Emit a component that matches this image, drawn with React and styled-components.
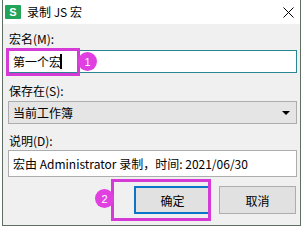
import React from "react";
import styled, { createGlobalStyle } from "styled-components";

const Global = createGlobalStyle`
  html, body { margin: 0; padding: 0; background: #ffffff; }
  body { font-family: "Noto Sans CJK SC", "Microsoft YaHei", sans-serif; font-size: 12px; color: #000; }
`;

const Win = styled.div`
  position: relative;
  margin-left: 2px;
  width: 299px;
  height: 226px;
  box-sizing: border-box;
  border-left: 1px solid #5f6f63;
  border-right: 1px solid #5f6f63;
  border-bottom: 1px solid #5f6f63;
  background: #f0f0f0;
  display: flex;
  flex-direction: column;
`;

const TitleBar = styled.div`
  height: 24px;
  background: #ffffff;
  display: flex;
  align-items: center;
  padding-left: 2px;
  flex-shrink: 0;
`;

const AppIcon = styled.div`
  width: 16px;
  height: 14px;
  background: #22a45a;
  color: #fff;
  font-family: "Liberation Sans", sans-serif;
  font-size: 11px;
  font-weight: bold;
  display: flex;
  align-items: center;
  justify-content: center;
  border-radius: 1px;
`;

const Title = styled.span`
  margin-left: 6px;
  font-size: 12px;
  line-height: 14px;
`;

const CloseBtn = styled.div`
  margin-left: auto;
  width: 24px;
  height: 24px;
  display: flex;
  align-items: center;
  justify-content: center;
`;

const Body = styled.div`
  padding: 6px 3px 0 5px;
  display: flex;
  flex-direction: column;
  flex: 1;
`;

const Label = styled.div`
  padding-left: 1px;
  line-height: 17px;
  height: 17px;
  margin-top: ${(p) => p.$mt || 0}px;
`;

const Field = styled.div`
  position: relative;
  box-sizing: border-box;
  height: ${(p) => p.$h}px;
  margin-top: ${(p) => p.$mt}px;
  border: 1px solid ${(p) => p.$border};
  background: ${(p) => p.$bg};
  display: flex;
  align-items: center;
  padding-left: 4px;
  line-height: 14px;
`;

const Caret = styled.span`
  display: inline-block;
  width: 2px;
  height: 15px;
  background: #000;
  margin-left: -1px;
`;

const Arrow = styled.span`
  position: absolute;
  right: 6px;
  top: 9px;
  width: 0;
  height: 0;
  border-left: 4px solid transparent;
  border-right: 4px solid transparent;
  border-top: 4px solid #000;
`;

const Buttons = styled.div`
  margin-top: 9px;
  display: flex;
  justify-content: flex-end;
  gap: 8px;
  padding-right: 1px;
`;

const Button = styled.div`
  box-sizing: border-box;
  width: 77px;
  height: 28px;
  background: #e1e1e1;
  border: ${(p) => (p.$primary ? "2px solid #0a74c8" : "1px solid #adadad")};
  display: flex;
  align-items: center;
  justify-content: center;
  font-size: 12px;
`;

const Highlight = styled.div`
  position: absolute;
  box-sizing: border-box;
  border: 3px solid #d63ad6;
  pointer-events: none;
`;

const Badge = styled.div`
  position: absolute;
  width: 19px;
  height: 19px;
  border-radius: 50%;
  background: #e040e0;
  color: #fff;
  font-family: "Liberation Sans", sans-serif;
  font-size: 11px;
  display: flex;
  align-items: center;
  justify-content: center;
`;

export default function App() {
  return (
    <>
      <Global />
      <Win>
        <TitleBar>
          <AppIcon>S</AppIcon>
          <Title>录制 JS 宏</Title>
          <CloseBtn>
            <svg width="11" height="11" viewBox="0 0 11 11">
              <path d="M0.5 0.5 L10.5 10.5 M10.5 0.5 L0.5 10.5" stroke="#000" strokeWidth="1" />
            </svg>
          </CloseBtn>
        </TitleBar>
        <Body>
          <Label>宏名(M):</Label>
          <Field $h={23} $mt={3} $border="#2a8791" $bg="#ffffff">
            第一个宏<Caret />
          </Field>
          <Label $mt={9}>保存在(S):</Label>
          <Field $h={23} $mt={2} $border="#adadad" $bg="#e5e5e5">
            当前工作簿
            <Arrow />
          </Field>
          <Label $mt={8}>说明(D):</Label>
          <Field $h={27} $mt={1} $border="#adadad" $bg="#ffffff">
            宏由 Administrator 录制，时间: 2021/06/30
          </Field>
          <Buttons>
            <Button $primary>确定</Button>
            <Button>取消</Button>
          </Buttons>
        </Body>
        <Highlight style={{ left: 3, top: 48, width: 74, height: 28 }} />
        <Badge style={{ left: 75, top: 52 }}>1</Badge>
        <Highlight style={{ left: 108, top: 179, width: 100, height: 42 }} />
        <Badge style={{ left: 92, top: 189 }}>2</Badge>
      </Win>
    </>
  );
}
